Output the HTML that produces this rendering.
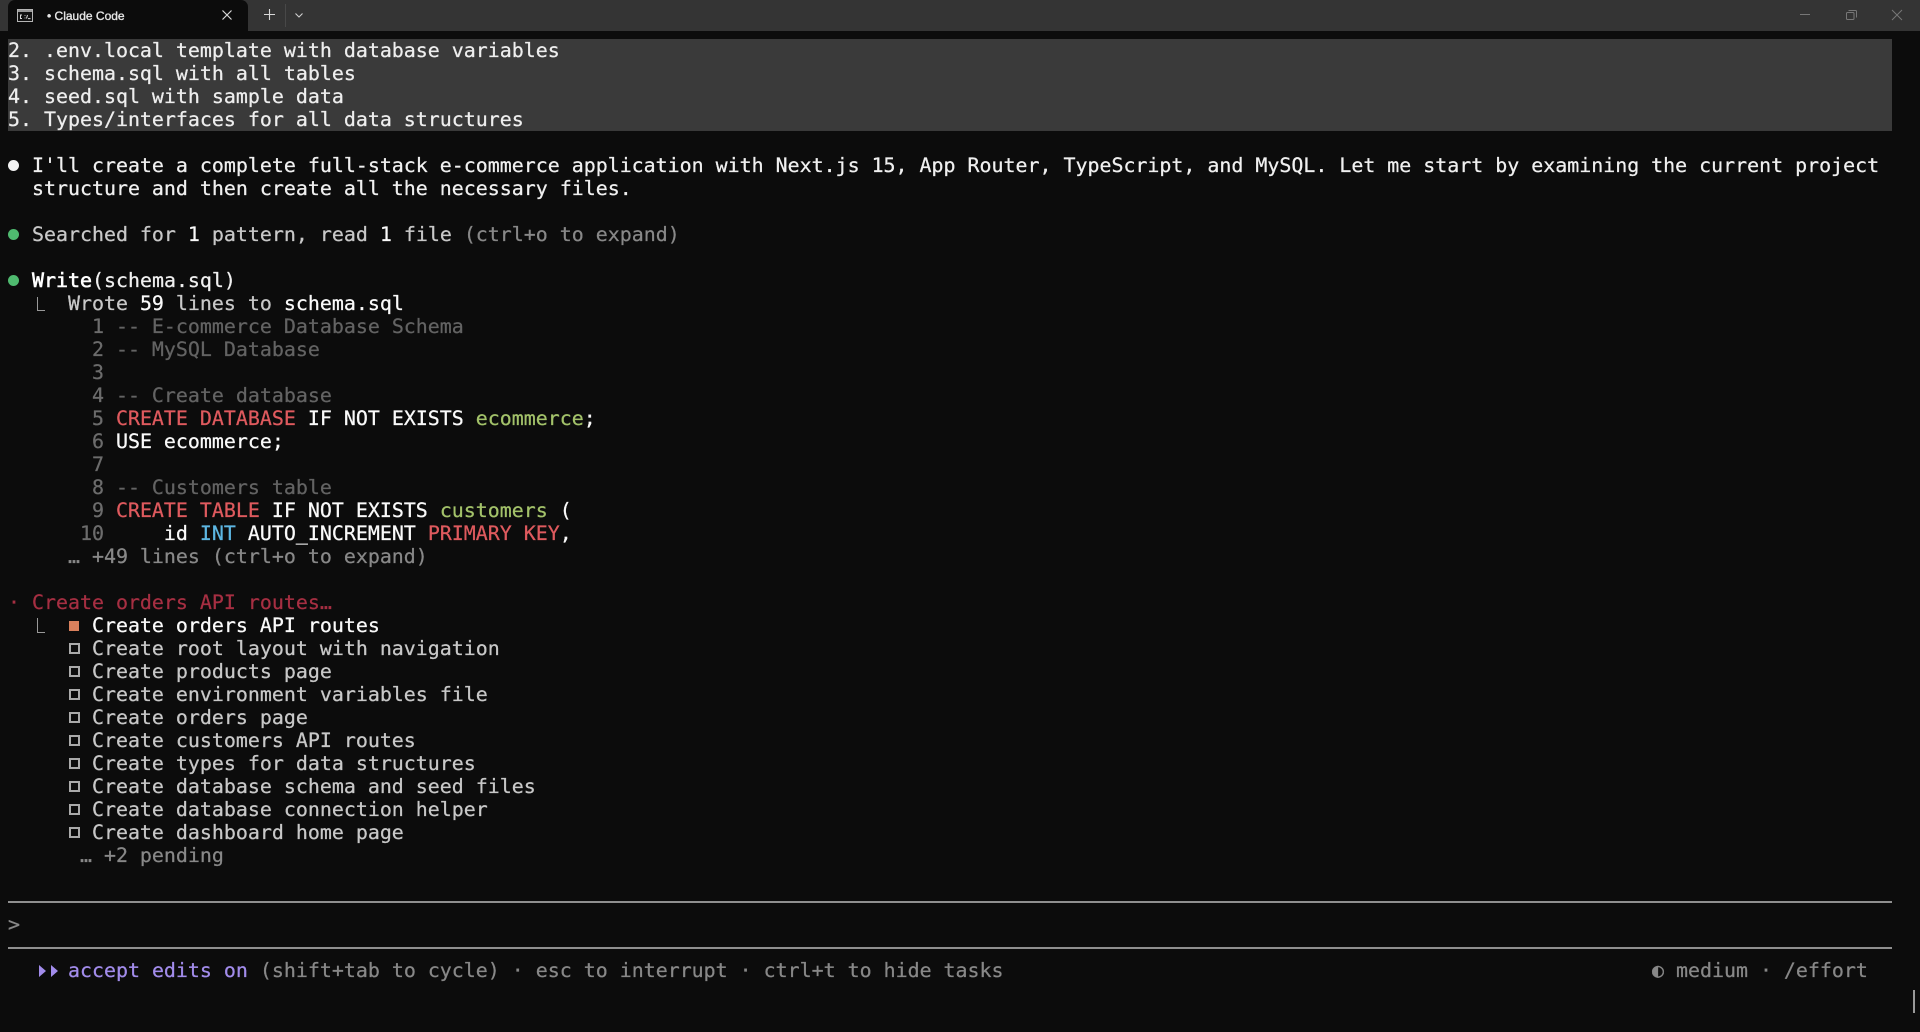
<!DOCTYPE html>
<html lang="en">
<head>
<meta charset="utf-8">
<title>Claude Code</title>
<style>
html,body{margin:0;padding:0;background:#0c0c0c;width:1920px;height:1032px;overflow:hidden}
body{position:relative}
#bar{position:absolute;left:0;top:0;width:1920px;height:31px;background:#343434}
#tab{position:absolute;left:8px;top:0;width:240px;height:31px;background:#0c0c0c;border-top-right-radius:7px;border-top-left-radius:7px}
#title{position:absolute;left:47px;top:7px;font:normal 12px/18px "Liberation Sans",sans-serif;color:#e6e6e6;white-space:pre;-webkit-text-stroke:0.35px #e6e6e6}
svg{position:absolute;overflow:visible}
#sel{position:absolute;left:8px;top:39px;width:1884px;height:92px;background:#3a3a3a}
#term{position:absolute;left:8px;top:39px;width:1900px;font-family:"DejaVu Sans Mono","Liberation Mono",monospace;font-size:19.93px;line-height:23px;color:#c8c8c8;-webkit-text-stroke:0.25px}
#term div{height:23px;position:relative;white-space:pre}
.w{color:#f0f0f0}.b{color:#fafafa}.d{color:#888}.c{color:#636363}.n{color:#6c6c6c}
.r{color:#df5a5e}.g{color:#a3c26a}.u{color:#5db6e2}.p{color:#a28ceb}.m{color:#a62f42}
.sl{color:#eeeeee}
.dot{position:absolute;left:0;top:6px;width:11px;height:11px;border-radius:50%}
.L{position:absolute;left:29px;top:5px;width:7px;height:13px;border-left:1.5px solid #999;border-bottom:1.5px solid #999}
.box{position:absolute;left:61px;top:6px;width:7px;height:7px;border:2px solid #aaa}
.fill{position:absolute;left:61px;top:7px;width:10px;height:10px;background:#d9805c}
.hr{position:absolute;left:8px;width:1884px;height:2px;background:#8f8f8f}
#cursor{position:absolute;left:1913px;top:990px;width:2px;height:23px;background:#999}
</style>
</head>
<body>
<div id="bar"></div>
<div id="tab"></div>
<svg style="left:17px;top:9px" width="16" height="13" viewBox="0 0 16 13">
<rect x=".5" y=".5" width="15" height="12" fill="#111" stroke="#b5b5b5"/>
<rect x="1" y="1" width="14" height="2" fill="#9a9a9a"/>
<path d="M5 6H3.5V9.5H5M8 6.2V7M8 8.6V9.4M10.5 6L9.5 9.5M11 9.6H13.5" stroke="#ddd" fill="none"/>
</svg>
<div id="title">•&nbsp;Claude Code</div>
<svg style="left:222px;top:10px" width="10" height="10" viewBox="0 0 10 10"><path d="M.5 .5L9.5 9.5M9.5 .5L.5 9.5" stroke="#d8d8d8" stroke-width="1.2"/></svg>
<svg style="left:264px;top:9px" width="11" height="11" viewBox="0 0 11 11"><path d="M5.5 0V11M0 5.5H11" stroke="#d8d8d8" stroke-width="1.1"/></svg>
<div style="position:absolute;left:285px;top:4px;width:1px;height:23px;background:#484848"></div>
<svg style="left:295px;top:13px" width="8" height="5" viewBox="0 0 8 5"><path d="M.5 .5L4 4L7.5 .5" stroke="#d0d0d0" fill="none" stroke-width="1.1"/></svg>
<svg style="left:1800px;top:14px" width="10" height="2"><path d="M0 .5H10" stroke="#777" stroke-width="1"/></svg>
<svg style="left:1846px;top:10px" width="11" height="10" viewBox="0 0 11 10"><rect x=".5" y="2.5" width="7.5" height="7" rx="1" fill="none" stroke="#777"/><path d="M2.5 .5H9.5Q10.5 .5 10.5 1.5V7.5" fill="none" stroke="#777"/></svg>
<svg style="left:1892px;top:10px" width="10" height="10" viewBox="0 0 10 10"><path d="M0 0L10 10M10 0L0 10" stroke="#777" stroke-width="1"/></svg>

<div id="sel"></div>
<div class="hr" style="top:901px"></div>
<div class="hr" style="top:947px"></div>

<div id="term">
<div class="sl">2. .env.local template with database variables</div>
<div class="sl">3. schema.sql with all tables</div>
<div class="sl">4. seed.sql with sample data</div>
<div class="sl">5. Types/interfaces for all data structures</div>
<div></div>
<div class="w"><span class="dot" style="background:#f2f2f2"></span>  I'll create a complete full-stack e-commerce application with Next.js 15, App Router, TypeScript, and MySQL. Let me start by examining the current project</div>
<div class="w">  structure and then create all the necessary files.</div>
<div></div>
<div><span class="dot" style="background:#4fba6f"></span>  Searched for <span class="b">1</span> pattern, read <span class="b">1</span> file <span class="d">(ctrl+o to expand)</span></div>
<div></div>
<div class="w"><span class="dot" style="background:#4fba6f"></span>  <span style="color:#fff;-webkit-text-stroke:0.6px #fff">Write</span>(schema.sql)</div>
<div><span class="L"></span>     Wrote <span class="b">59</span> lines to <span class="b">schema.sql</span></div>
<div class="c"><span class="n">       1 </span>-- E-commerce Database Schema</div>
<div class="c"><span class="n">       2 </span>-- MySQL Database</div>
<div class="n">       3</div>
<div class="c"><span class="n">       4 </span>-- Create database</div>
<div class="b"><span class="n">       5 </span><span class="r">CREATE DATABASE</span> IF NOT EXISTS <span class="g">ecommerce</span>;</div>
<div class="b"><span class="n">       6 </span>USE ecommerce;</div>
<div class="n">       7</div>
<div class="c"><span class="n">       8 </span>-- Customers table</div>
<div class="b"><span class="n">       9 </span><span class="r">CREATE TABLE</span> IF NOT EXISTS <span class="g">customers</span> (</div>
<div class="b"><span class="n">      10 </span>    id <span class="u">INT</span> AUTO_INCREMENT <span class="r">PRIMARY KEY</span>,</div>
<div class="d">     … +49 lines (ctrl+o to expand)</div>
<div></div>
<div class="m">· Create orders API routes…</div>
<div class="b"><span class="L" style="top:4px;height:14px"></span><span class="fill"></span>       Create orders API routes</div>
<div><span class="box"></span>       Create root layout with navigation</div>
<div><span class="box"></span>       Create products page</div>
<div><span class="box"></span>       Create environment variables file</div>
<div><span class="box"></span>       Create orders page</div>
<div><span class="box"></span>       Create customers API routes</div>
<div><span class="box"></span>       Create types for data structures</div>
<div><span class="box"></span>       Create database schema and seed files</div>
<div><span class="box"></span>       Create database connection helper</div>
<div><span class="box"></span>       Create dashboard home page</div>
<div class="d">      … +2 pending</div>
<div></div>
<div></div>
<div class="d">&gt;</div>
<div></div>
<div class="d"><svg style="left:30px;top:6px" width="20" height="12" viewBox="0 0 20 12"><path d="M1 0L8 6L1 12ZM13 0L20 6L13 12Z" fill="#a28ceb"/></svg>     <span class="p">accept edits on</span> (shift+tab to cycle) · esc to interrupt · ctrl+t to hide tasks<span style="position:absolute;left:1644px;top:0">◐ medium · /effort</span></div>
</div>
<div id="cursor"></div>
</body>
</html>
